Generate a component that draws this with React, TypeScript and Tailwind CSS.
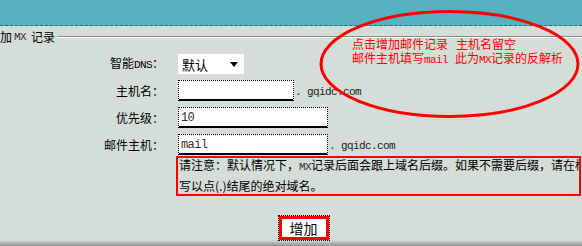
import React from "react";

const cjk = "font-['SimSun','Noto_Sans_CJK_SC',sans-serif]";

function Ascii({ children, className = "" }: { children: React.ReactNode; className?: string }) {
    return (
        <span className={`font-['Liberation_Mono','Noto_Sans_CJK_SC',monospace] text-[11px] tracking-[-0.6px] ${className}`}>
            {children}
        </span>
    );
}

function Field({ width, value }: { width: string; value?: string }) {
    return (
        <div
            className={`${width} flex h-[21px] items-center border-x border-t border-dotted border-black bg-white px-[2px] shadow-[inset_0_-2px_0_#000]`}
        >
            {value && <Ascii className="text-[12px] text-[#3d2e26]">{value}</Ascii>}
        </div>
    );
}

function Row({ label, children }: { label: React.ReactNode; children: React.ReactNode }) {
    return (
        <div className="flex items-center">
            <div className="w-[165px] pr-[1px] text-right">{label}</div>
            <div className="ml-[13px] flex items-center">{children}</div>
        </div>
    );
}

export default function App() {
    return (
        <div className={`relative flex h-[246px] w-[582px] flex-col overflow-hidden bg-[#d4ddd7] text-[12px] leading-none text-black ${cjk}`}>
            {/* Title bar */}
            <div className="h-[26px] shrink-0 border-b border-dashed border-[#256f7c] bg-[#57b1c0]" />

            {/* Legend */}
            <div className="mt-[5px] flex h-[14px] items-center">
                <span>加</span>
                <Ascii className="ml-[2px] text-[#333]">MX</Ascii>
                <span className="ml-[5px]">记录</span>
                <div className="ml-[2px] h-[2px] flex-1 border-t border-b border-t-[#8b918d] border-b-white" />
            </div>

            {/* Form */}
            <div className="mt-[11px] flex flex-col gap-[6px]">
                <Row label={<>智能<Ascii>DNS</Ascii>：</>}>
                    <div className="flex h-[20px] w-[66px] items-center justify-between bg-white pl-[4px] pr-[6px]">
                        <span className="text-[13px]">默认</span>
                        <svg width="8" height="5" viewBox="0 0 8 5">
                            <path d="M0 0h8L4 5z" fill="#000" />
                        </svg>
                    </div>
                </Row>
                <Row label="主机名：">
                    <Field width="w-[116px]" />
                    <Ascii className="ml-[1px] mt-[4px] text-[#222]">. gqidc.com</Ascii>
                </Row>
                <Row label="优先级：">
                    <Field width="w-[150px]" value="10" />
                </Row>
                <div className="flex flex-col">
                    <Row label="邮件主机：">
                        <Field width="w-[150px]" value="mail" />
                        <Ascii className="ml-[1px] mt-[4px] text-[#222]">. gqidc.com</Ascii>
                    </Row>
                    <div className="ml-[176px] mt-[1px] flex h-[40px] w-[405px] flex-col gap-[7px] overflow-hidden border-2 border-[#ff0000] px-[1px] pt-[1px] leading-[12px]">
                        <div className="whitespace-nowrap">
                            请注意：默认情况下，<Ascii className="text-[#333]">MX</Ascii>记录后面会跟上域名后缀。如果不需要后缀，请在框
                        </div>
                        <div className="whitespace-nowrap">写以点(.)结尾的绝对域名。</div>
                    </div>
                </div>
            </div>

            {/* Submit */}
            <div className="mt-[20px] flex justify-center pl-[25px]">
                <button className="flex h-[24px] w-[50px] items-center justify-center border-[3px] border-[#ff0000] bg-white outline-1 outline-dotted outline-black text-[14px]">
                    增加
                </button>
            </div>

            <div className="mt-auto h-[12px] bg-gradient-to-b from-transparent to-[#8d928f]" />

            {/* Annotation */}
            <div className="absolute left-[319px] top-[9px] h-[110px] w-[261px]">
                <svg className="absolute inset-0" width="261" height="110" viewBox="0 0 261 110">
                    <ellipse cx="130.5" cy="55" rx="128.5" ry="52.5" fill="none" stroke="#ff0000" strokeWidth="3" />
                </svg>
                <div className="absolute left-[33px] top-[28px] flex flex-col text-[12px] leading-[14px] text-[#ff0000]">
                    <div className="whitespace-nowrap">
                        点击增加邮件记录<span className="ml-[8px]">主机名留空</span>
                    </div>
                    <div className="whitespace-nowrap">
                        邮件主机填写<Ascii>mail</Ascii>
                        <span className="ml-[7px]">此为</span>
                        <Ascii>MX</Ascii>记录的反解析
                    </div>
                </div>
            </div>
        </div>
    );
}
